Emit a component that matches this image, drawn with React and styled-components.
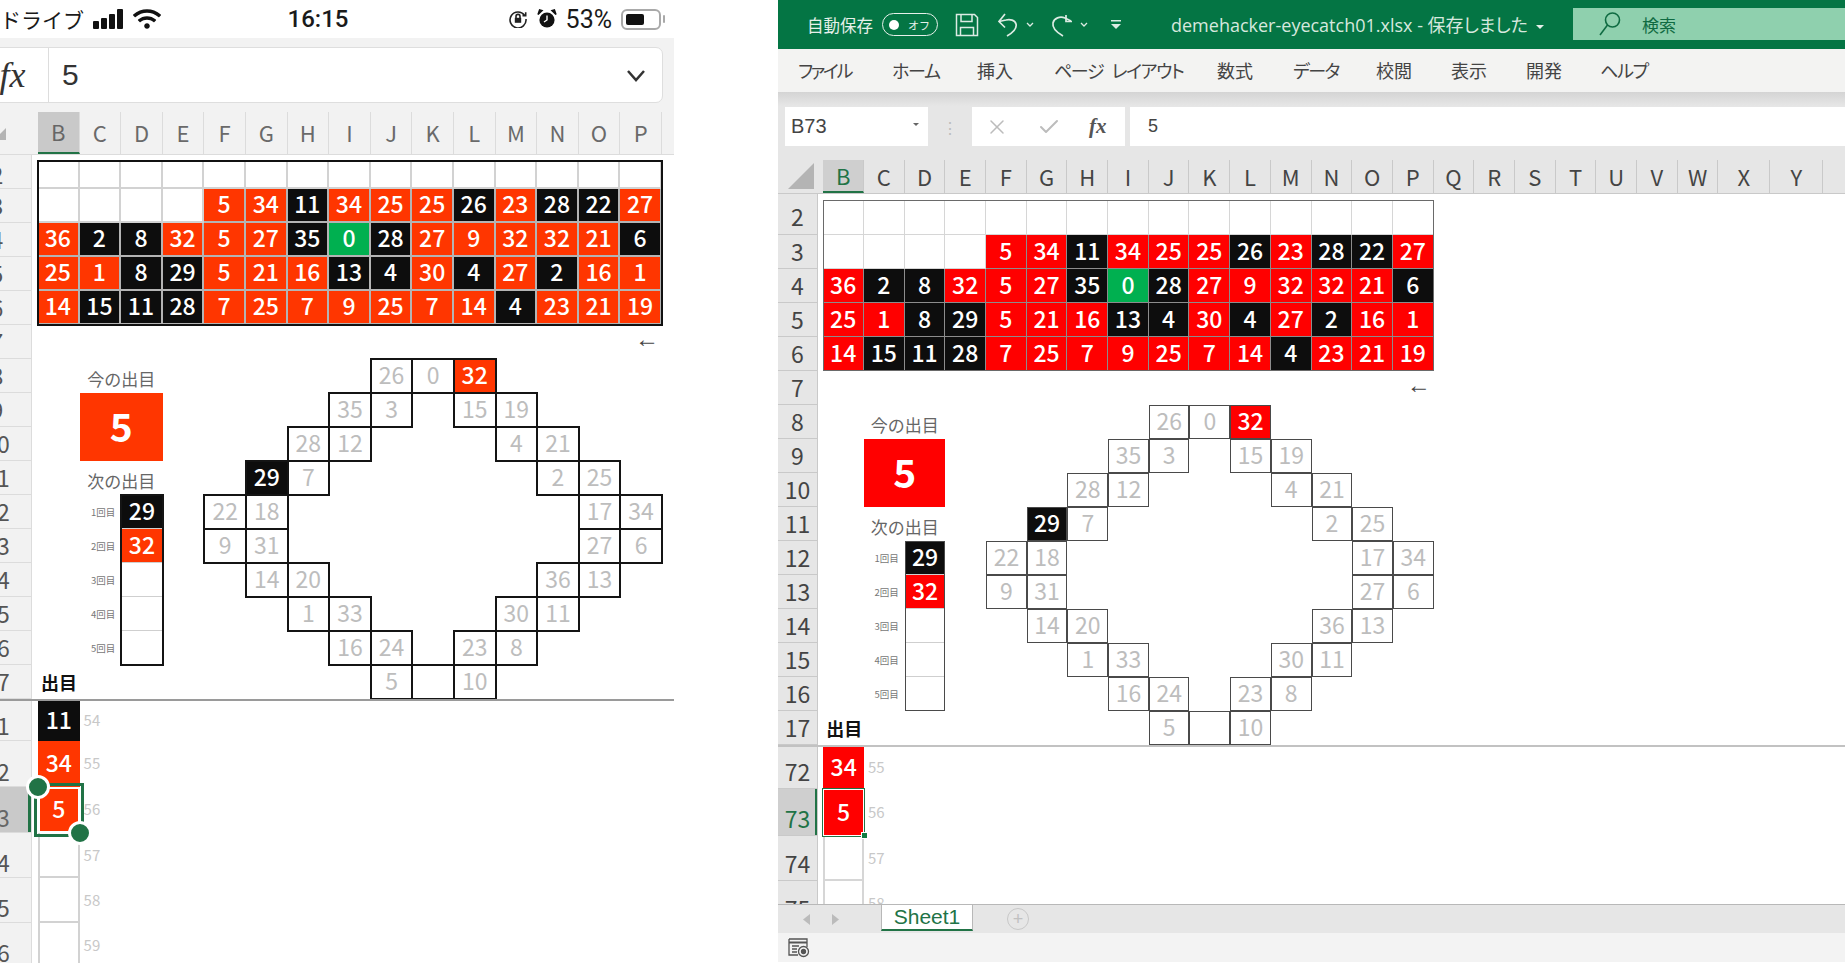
import React from 'react';
import styled, { createGlobalStyle, ThemeProvider } from 'styled-components';
import { FaWifi } from 'react-icons/fa';
import { X, Check } from 'lucide-react';

const jp = '"Noto Sans CJK JP", "Noto Sans", sans-serif';

const phoneTheme = {
    col: 41.6,
    strip: 32,
    gutter: 6,
    labelPull: 37,
    headBg: '#f2f2f2',
    headText: '#6a6a6a',
    headLine: '#dcdcdc',
    stripText: '#555',
    red: '#ff3600',
    black: '#0d0d0d',
    row2: 28,
    tableLine: '#111',
    tableLineW: 2,
    cellLine: '#b4b4b4',
    blankLine: '#d2d2d2',
    cellLineW: 2,
    wheelLine: '#141414',
    wheelW: 2,
    freezeLine: '#9a9a9a',
    selHead: '#c9c9c9',
    selText: '#666',
    digit: 23,
};

const desktopTheme = {
    col: 40.7,
    strip: 40,
    gutter: 5.3,
    labelPull: 0,
    headBg: '#e6e6e6',
    headText: '#444',
    headLine: '#c9c9c9',
    stripText: '#444',
    red: '#ff0000',
    black: '#0d0d0d',
    row2: 35,
    tableLine: '#6a6a6a',
    tableLineW: 1,
    cellLine: '#8c8c8c',
    blankLine: '#d6d6d6',
    cellLineW: 1,
    wheelLine: '#4a4a4a',
    wheelW: 1,
    freezeLine: '#c2c2c2',
    selHead: '#cfcfcf',
    selText: '#217346',
    digit: 23,
};

const TOP_ROWS = [
    '_ _ _ _ _ _ _ _ _ _ _ _ _ _ _',
    '_ _ _ _ r5 r34 b11 r34 r25 r25 b26 r23 b28 b22 r27',
    'r36 b2 b8 r32 r5 r27 b35 g0 b28 r27 r9 r32 r32 r21 b6',
    'r25 r1 b8 b29 r5 r21 r16 b13 b4 r30 b4 r27 b2 r16 r1',
    'r14 b15 b11 b28 r7 r25 r7 r9 r25 r7 r14 b4 r23 r21 r19',
];

const WHEEL_ROWS = [
    '_ _ _ _ p26 p0 r32 _ _ _ _',
    '_ _ _ p35 p3 _ p15 p19 _ _ _',
    '_ _ p28 p12 _ _ _ p4 p21 _ _',
    '_ b29 p7 _ _ _ _ _ p2 p25 _',
    'p22 p18 _ _ _ _ _ _ _ p17 p34',
    'p9 p31 _ _ _ _ _ _ _ p27 p6',
    '_ p14 p20 _ _ _ _ _ p36 p13 _',
    '_ _ p1 p33 _ _ _ p30 p11 _ _',
    '_ _ _ p16 p24 _ p23 p8 _ _ _',
    '_ _ _ _ p5 p p10 _ _ _ _',
];

const NEXT_ROWS = [
    { label: '1回目', tone: 'b', value: '29' },
    { label: '2回目', tone: 'r', value: '32' },
    { label: '3回目' },
    { label: '4回目' },
    { label: '5回目' },
];

const LETTERS = 'BCDEFGHIJKLMNOP'.split('');
const EXTRA_LETTERS = [
    ['Q', 40.7], ['R', 40.7], ['S', 40.7], ['T', 40.7], ['U', 40.7],
    ['V', 40.7], ['W', 40.7], ['X', 52], ['Y', 53], ['Z', 60],
];
const TABS = [
    ['ファイル', 94, -2.3], ['ホーム', 85, -1.2], ['挿入', 77, 0], ['ページ レイアウト', 163, -1.4], ['数式', 76, 0],
    ['データ', 83, -1.5], ['校閲', 75, 0], ['表示', 75, 0], ['開発', 74, 0], ['ヘルプ', 60, -1.2],
];

const toneBg = (p, tone) => {
    if (tone === 'r') return p.theme.red;
    if (tone === 'b') return p.theme.black;
    if (tone === 'g') return '#00b050';
    return '#fff';
};

const GlobalStyle = createGlobalStyle`
    html, body {
        margin: 0;
        background: #fff;
        overflow: hidden;
    }
    body {
        font-family: ${jp};
    }
`;

const Page = styled.div`
    display: flex;
    height: 963px;
    width: 1845px;
    overflow: hidden;
`;

const Panel = styled.div`
    display: flex;
    flex-direction: column;
    height: 963px;
    overflow: hidden;
    width: ${p => p.$width}px;
    margin-left: ${p => p.$offset || 0}px;
`;

/* phone */
const StatusBar = styled.div`
    display: grid;
    grid-template-columns: 270px 96px 1fr;
    align-items: center;
    height: 38px;
    color: #1a1a1a;
    font-size: 21px;
`;

const StatusGroup = styled.div`
    display: flex;
    align-items: center;
    gap: ${p => p.$gap || 0}px;
    justify-content: ${p => (p.$end ? 'flex-end' : 'flex-start')};
    padding-right: ${p => (p.$end ? 10 : 0)}px;
`;

const Clock = styled.div`
    font-family: "Roboto", sans-serif;
    font-weight: 500;
    font-size: 24px;
    text-align: center;
`;

const Percent = styled.span`
    font-family: "Roboto", sans-serif;
    font-size: 25px;
`;

const Bars = styled.div`
    display: flex;
    align-items: flex-end;
    gap: 2px;
    height: 20px;
    margin-left: 9px;
    margin-right: 10px;
`;

const Bar = styled.span`
    display: block;
    width: 6px;
    background: #111;
    border-radius: 1px;
    height: ${p => p.$h}px;
`;

const Battery = styled.div`
    display: flex;
    align-items: center;
    width: 40px;
    height: 21px;
    padding: 3px;
    box-sizing: border-box;
    border: 2px solid #a9a9a9;
    border-radius: 6px;
    margin-right: 3px;
    position: relative;

    &::before {
        content: '';
        display: block;
        width: 18px;
        height: 100%;
        border-radius: 2px;
        background: #111;
    }

    &::after {
        content: '';
        position: absolute;
        right: -6px;
        top: 4px;
        width: 2px;
        height: 8px;
        border-radius: 2px;
        background: #a9a9a9;
    }
`;

const PhoneChrome = styled.div`
    background: #f2f2f2;
    padding-top: 9px;
    height: 74px;
    box-sizing: border-box;
    flex-shrink: 0;
`;

const PhoneFormula = styled.div`
    display: flex;
    align-items: center;
    height: 56px;
    width: 673px;
    margin-left: -10px;
    background: #fff;
    border: 1px solid #dedede;
    border-radius: 7px;
    box-sizing: border-box;
`;

const PhoneFx = styled.div`
    width: 58px;
    height: 100%;
    display: flex;
    align-items: center;
    justify-content: center;
    padding-right: 14px;
    box-sizing: border-box;
    border-right: 1px solid #ddd;
    font-family: "Liberation Serif", serif;
    font-style: italic;
    font-size: 36px;
    color: #333;
`;

const PhoneValue = styled.div`
    flex: 1;
    padding-left: 13px;
    font-family: "Liberation Sans", sans-serif;
    font-size: 30px;
    color: #333;
`;

const ChevronSlot = styled.div`
    display: flex;
    margin-right: 15px;
`;

/* shared column headers */
const ColumnHeader = styled.div`
    display: flex;
    background: ${p => p.theme.headBg};
    border-bottom: 1px solid ${p => p.theme.headLine};
    height: ${p => p.$height}px;
    box-sizing: border-box;
    flex-shrink: 0;
`;

const Corner = styled.div`
    display: flex;
    align-items: flex-end;
    justify-content: ${p => (p.$crop ? 'flex-start' : 'center')};
    width: ${p => p.theme.strip + p.theme.gutter + (p.$crop ? 6 : 0)}px;
    padding-bottom: ${p => (p.$crop ? 14 : 4)}px;
    margin-left: ${p => (p.$crop ? -6 : 0)}px;
    box-sizing: border-box;
    flex-shrink: 0;
`;

const ColumnLetter = styled.div`
    width: ${p => (p.$width ? p.$width : p.theme.col)}px;
    flex-shrink: 0;
    display: flex;
    align-items: center;
    justify-content: center;
    padding-bottom: 2px;
    box-sizing: border-box;
    font-size: 22px;
    color: ${p => (p.$active ? p.theme.selText : p.theme.headText)};
    background: ${p => (p.$active ? p.theme.selHead : 'transparent')};
    border-right: 1px solid ${p => p.theme.headLine};
    border-bottom: ${p => (p.$active ? '2px solid #217346' : 'none')};
`;

/* sheet */
const SheetBody = styled.div`
    display: flex;
    flex-shrink: 0;
`;

const RowStrip = styled.div`
    width: ${p => p.theme.strip}px;
    flex-shrink: 0;
    padding-top: 6px;
    background: ${p => p.theme.headBg};
    border-right: 1px solid ${p => p.theme.headLine};
    box-sizing: border-box;
`;

const RowNumber = styled.div`
    height: ${p => p.$height}px;
    display: flex;
    align-items: ${p => (p.$low ? 'flex-end' : 'center')};
    box-sizing: border-box;
    padding-bottom: ${p => (p.$low ? p.$low : 2)}px;
    border-bottom: 1px solid ${p => p.theme.headLine};
    background: ${p => (p.$active ? p.theme.selHead : 'transparent')};
    color: ${p => (p.$active ? p.theme.selText : p.theme.stripText)};
    font-size: 23px;
    line-height: 28px;
    overflow: hidden;
    position: relative;
`;

const RowLabel = styled.span`
    display: block;
    flex: 1;
    margin-left: -${p => p.theme.labelPull}px;
    text-align: center;
`;

const SelectedMark = styled.span`
    position: absolute;
    right: 0;
    top: 0;
    bottom: 0;
    width: ${p => p.$width}px;
    background: #217346;
`;

const SheetArea = styled.div`
    padding: 6px 0 0 ${p => p.theme.gutter}px;
`;

const Table = styled.div`
    display: grid;
    width: ${p => p.theme.col * 15}px;
    grid-template-columns: repeat(15, ${p => p.theme.col}px);
    grid-template-rows: ${p => p.theme.row2}px repeat(4, 34px);
    outline: ${p => p.theme.tableLineW}px solid ${p => p.theme.tableLine};
    outline-offset: -1px;
`;

const TableCell = styled.div`
    display: flex;
    align-items: center;
    justify-content: center;
    box-sizing: border-box;
    padding-bottom: 3px;
    background: ${p => toneBg(p, p.$tone)};
    border-right: ${p => p.theme.cellLineW}px solid ${p => (p.$tone ? p.theme.cellLine : p.theme.blankLine)};
    border-bottom: ${p => p.theme.cellLineW}px solid ${p => (p.$tone ? p.theme.cellLine : p.theme.blankLine)};
    color: #fff;
    font-size: ${p => p.theme.digit}px;
    font-weight: 500;
    line-height: 1;
`;

const ArrowRow = styled.div`
    height: 34px;
    width: ${p => p.theme.col * 15}px;
    display: flex;
    align-items: center;
    justify-content: flex-end;
    padding: 0 3px 7px 0;
    box-sizing: border-box;
    font-family: "Liberation Sans", sans-serif;
    font-size: 24px;
    line-height: 1;
    color: #444;
`;

const Board = styled.div`
    display: flex;
`;

const SideGrid = styled.div`
    display: grid;
    grid-template-columns: repeat(4, ${p => p.theme.col}px);
    grid-auto-rows: 34px;
    height: 340px;
`;

const Caption = styled.div`
    grid-column: 2 / 4;
    display: flex;
    align-items: flex-end;
    justify-content: center;
    padding-bottom: 6px;
    font-size: 17px;
    color: #666;
    line-height: 1;
    white-space: nowrap;
`;

const NowBox = styled.div`
    grid-column: 2 / 4;
    grid-row: span 2;
    display: flex;
    align-items: center;
    justify-content: center;
    padding-bottom: 4px;
    box-sizing: border-box;
    background: ${p => p.theme.red};
    color: #fff;
    font-size: 39px;
    font-weight: 700;
`;

const NextLabels = styled.div`
    grid-column: 1 / 3;
    grid-row: span 5;
    display: grid;
    grid-auto-rows: 34px;
`;

const NextLabel = styled.div`
    display: flex;
    align-items: center;
    justify-content: flex-end;
    padding-right: 6px;
    font-size: 9.5px;
    color: #777;
`;

const NextList = styled.div`
    grid-column: 3;
    grid-row: span 5;
    display: grid;
    grid-auto-rows: 34px;
    outline: ${p => p.theme.wheelW}px solid ${p => p.theme.wheelLine};
    outline-offset: -1px;
`;

const NextCell = styled.div`
    display: flex;
    align-items: center;
    justify-content: center;
    padding-bottom: 3px;
    box-sizing: border-box;
    background: ${p => toneBg(p, p.$tone)};
    border-bottom: 1px solid #cfcfcf;
    color: #fff;
    font-size: ${p => p.theme.digit}px;
    font-weight: 500;
    line-height: 1;
`;

const SectionTitle = styled.div`
    grid-column: 1 / 3;
    display: flex;
    align-items: center;
    padding-left: 3px;
    font-size: 18px;
    font-weight: 700;
    color: #111;
    white-space: nowrap;
`;

const Wheel = styled.div`
    display: grid;
    grid-template-columns: repeat(11, ${p => p.theme.col}px);
    grid-auto-rows: 34px;
    height: 340px;
`;

const WheelCell = styled.div`
    display: flex;
    align-items: center;
    justify-content: center;
    padding-bottom: 3px;
    box-sizing: border-box;
    background: ${p => (p.$empty ? 'transparent' : toneBg(p, p.$tone))};
    outline: ${p => (p.$empty ? 'none' : `${p.theme.wheelW}px solid ${p.theme.wheelLine}`)};
    outline-offset: -1px;
    color: ${p => (p.$tone === 'p' ? '#bdbdbd' : '#fff')};
    font-size: ${p => p.theme.digit}px;
    font-weight: ${p => (p.$tone === 'p' ? 400 : 500)};
    line-height: 1;
`;

const FreezeLine = styled.div`
    height: 2px;
    flex-shrink: 0;
    background: ${p => p.theme.freezeLine};
`;

/* rows under the frozen pane */
const LowerPane = styled.div`
    flex: 1;
    min-height: 0;
    overflow: hidden;
`;

const LowerRow = styled.div`
    display: flex;
    height: ${p => p.$height}px;
`;

const LowerHead = styled.div`
    width: ${p => p.theme.strip}px;
    flex-shrink: 0;
    background: ${p => p.theme.headBg};
    border-right: 1px solid ${p => p.theme.headLine};
    box-sizing: border-box;
`;

const LowerCell = styled.div`
    margin-left: ${p => p.theme.gutter}px;
    width: ${p => p.theme.col}px;
    flex-shrink: 0;
    display: flex;
    align-items: center;
    justify-content: center;
    padding-bottom: 3px;
    box-sizing: border-box;
    background: ${p => toneBg(p, p.$tone)};
    border: 1px solid ${p => (p.$tone ? 'transparent' : p.theme.blankLine)};
    border-width: ${p => (p.$tone ? 0 : '0 2px 2px 2px')};
    color: #fff;
    font-size: ${p => p.theme.digit}px;
    font-weight: 500;
    line-height: 1;
    position: relative;
`;

const SelectedCell = styled(LowerCell)`
    box-shadow: inset 0 0 0 ${p => p.$inner}px #fff;
    outline: ${p => p.$ring}px solid #217346;
    outline-offset: ${p => p.$gap}px;
    z-index: 1;
`;

const GripDot = styled.span`
    position: absolute;
    width: 18px;
    height: 18px;
    border-radius: 50%;
    background: #217346;
    border: 3px solid #fff;
    left: ${p => (p.$end ? '100%' : '0')};
    top: ${p => (p.$end ? '100%' : '0')};
    transform: translate(-50%, -50%);
`;

const FillHandle = styled.span`
    position: absolute;
    right: -4px;
    bottom: -3px;
    width: 5px;
    height: 5px;
    background: #107c41;
    border: 1px solid #fff;
`;

const RowNote = styled.div`
    display: flex;
    align-items: center;
    margin-left: 4px;
    padding-bottom: 3px;
    font-size: 15px;
    color: #c8c8c8;
`;

/* excel window */
const TitleBar = styled.div`
    display: flex;
    align-items: center;
    height: 49px;
    flex-shrink: 0;
    background: #047544;
    color: #e6f0ea;
    padding-left: 29px;
`;

const AutoSaveText = styled.span`
    font-size: 16.5px;
    white-space: nowrap;
`;

const Toggle = styled.div`
    display: flex;
    align-items: center;
    gap: 9px;
    width: 56px;
    height: 23px;
    margin-left: 9px;
    padding-left: 6px;
    box-sizing: border-box;
    border: 1.5px solid #e6f0ea;
    border-radius: 12px;
    font-size: 11px;
    white-space: nowrap;

    &::before {
        content: '';
        width: 10px;
        height: 10px;
        border-radius: 50%;
        background: #fff;
        flex-shrink: 0;
    }
`;

const QuickIcons = styled.div`
    display: flex;
    align-items: center;
    margin-left: 17px;
    color: #dcebe3;
`;

const IconGap = styled.span`
    width: ${p => p.$width}px;
`;

const TitleText = styled.div`
    margin-left: 49px;
    padding-bottom: 2px;
    font-family: "Open Sans", ${jp};
    font-size: 18px;
    white-space: nowrap;
    color: #d6e8de;
    font-feature-settings: "palt";
`;

const Caret = styled.span`
    display: inline-block;
    margin-left: 8px;
    vertical-align: 3px;
    border-left: 4px solid transparent;
    border-right: 4px solid transparent;
    border-top: 4px solid #e6f0ea;
`;

const SearchBox = styled.div`
    display: flex;
    align-items: center;
    gap: 21px;
    margin-left: auto;
    width: 272px;
    height: 32px;
    margin-bottom: 1px;
    padding-left: 26px;
    box-sizing: border-box;
    background: #8fd0ae;
    color: #0f6b42;
    font-size: 17px;
    flex-shrink: 0;
`;

const Ribbon = styled.div`
    display: flex;
    align-items: center;
    height: 43px;
    flex-shrink: 0;
    padding: 0 0 2px 8px;
    box-sizing: border-box;
    background: #f3f3f2;
`;

const RibbonTab = styled.div`
    width: ${p => p.$width}px;
    flex-shrink: 0;
    padding-left: 12px;
    box-sizing: border-box;
    font-size: 18px;
    color: #444;
    white-space: nowrap;
    font-feature-settings: "palt";
    letter-spacing: ${p => p.$tight}px;
    word-spacing: 6px;
`;

const FormulaBand = styled.div`
    display: flex;
    align-items: center;
    height: 68px;
    flex-shrink: 0;
    padding: 15px 0 14px 7px;
    box-sizing: border-box;
    background: linear-gradient(#d4d4d4 0, #e6e6e6 14px);
`;

const NameBox = styled.div`
    display: flex;
    align-items: center;
    justify-content: space-between;
    width: 143px;
    height: 39px;
    padding: 0 9px 0 6px;
    box-sizing: border-box;
    background: #fff;
    font-family: "Liberation Sans", sans-serif;
    font-size: 20px;
    color: #444;
`;

const TinyCaret = styled.span`
    border-left: 3px solid transparent;
    border-right: 3px solid transparent;
    border-top: 3px solid #666;
    margin-bottom: 4px;
`;

const Splitter = styled.div`
    width: 44px;
    flex-shrink: 0;
    display: flex;
    align-items: center;
    justify-content: center;
    color: #bdbdbd;
    font-size: 16px;
`;

const FxButtons = styled.div`
    display: flex;
    align-items: center;
    width: 153px;
    height: 39px;
    padding-left: 13px;
    gap: 28px;
    box-sizing: border-box;
    background: #fff;
    color: #bcbcbc;
`;

const FxLabel = styled.span`
    font-family: "Liberation Serif", serif;
    font-style: italic;
    font-weight: 700;
    font-size: 21px;
    color: #555;
`;

const FormulaInput = styled.div`
    flex: 1;
    display: flex;
    align-items: center;
    height: 39px;
    margin-left: 5px;
    padding-left: 18px;
    background: #fff;
    font-family: "Liberation Sans", sans-serif;
    font-size: 18px;
    color: #444;
`;

const SheetViewport = styled.div`
    flex: 1;
    min-height: 0;
    display: flex;
    flex-direction: column;
    overflow: hidden;
`;

const TabBar = styled.div`
    display: flex;
    align-items: stretch;
    height: 29px;
    flex-shrink: 0;
    background: #e6e6e6;
    border-top: 1px solid #b8b8b8;
    box-sizing: border-box;
`;

const TabArrows = styled.div`
    display: flex;
    align-items: center;
    gap: 22px;
    width: 103px;
    padding-left: 25px;
    box-sizing: border-box;
    color: #bbb;
`;

const SheetTab = styled.div`
    width: 92px;
    display: flex;
    align-items: center;
    justify-content: center;
    background: #fff;
    border-left: 1px solid #b8b8b8;
    border-right: 1px solid #b8b8b8;
    border-bottom: 2px solid #217346;
    box-sizing: border-box;
    margin-bottom: 2px;
    font-family: "Liberation Sans", sans-serif;
    font-size: 21px;
    color: #217346;
`;

const AddSheet = styled.div`
    align-self: center;
    margin-left: 34px;
    width: 20px;
    height: 20px;
    border: 1.5px solid #c8c8c8;
    border-radius: 50%;
    display: flex;
    align-items: center;
    justify-content: center;
    color: #c0c0c0;
    font-family: "Liberation Sans", sans-serif;
    font-size: 18px;
    line-height: 1;
`;

const StatusStrip = styled.div`
    display: flex;
    align-items: center;
    height: 29px;
    margin-bottom: 1px;
    flex-shrink: 0;
    padding-left: 10px;
    background: #f3f3f3;
`;

const WifiIcon = styled(FaWifi)`
    font-size: 28px;
    color: #111;
`;

/* drawings */
const OrientationLock = () => (
    <svg width="20" height="18" viewBox="0 0 20 18" fill="none" stroke="#222" strokeWidth="1.6">
        <path d="M16.5 5.2A8 8 0 1 0 18 9" />
        <path d="M14.5 5.6h3.2V2.2" />
        <rect x="6.8" y="7.8" width="6.4" height="5" fill="#222" stroke="none" />
        <path d="M8 8V6.4a2 2 0 0 1 4 0V8" />
    </svg>
);

const AlarmClock = () => (
    <svg width="20" height="20" viewBox="0 0 20 20">
        <circle cx="10" cy="11" r="7.6" fill="#111" />
        <path d="M1 5.5 5 1.6 2.6 1ZM19 5.5 15 1.6 17.4 1Z" fill="#111" stroke="#111" strokeWidth="1.5" />
        <path d="M10 6.5V11l-3 2" stroke="#fff" strokeWidth="1.4" fill="none" />
    </svg>
);

const FormulaCaret = () => (
    <svg width="22" height="22" viewBox="0 0 22 22" fill="none" stroke="#333" strokeWidth="2.5">
        <path d="M3 7l8 9 8-9" />
    </svg>
);

const CornerTriangle = ({ size }) => (
    <svg width={size} height={size} viewBox="0 0 24 24">
        <path d="M24 0V24H0Z" fill="#b4b4b4" />
    </svg>
);

const SaveIcon = () => (
    <svg width="24" height="24" viewBox="0 0 24 24" fill="none" stroke="currentColor" strokeWidth="1.5">
        <path d="M1.5 1.5h18l3 3v18h-21Z" />
        <path d="M6 1.5v7h11v-7" />
        <path d="M5.5 22.5v-8h13v8" />
    </svg>
);

const UndoIcon = () => (
    <svg width="24" height="26" viewBox="0 0 24 26" fill="none" stroke="currentColor" strokeWidth="1.7">
        <path d="M11 24C18 20 21 16 20 12c-1-4-6-5-10-4L3 9.5" />
        <path d="M9 2 3 9.5l6 6" />
    </svg>
);

const RedoIcon = () => (
    <svg width="24" height="26" viewBox="0 0 24 26" fill="none" stroke="currentColor" strokeWidth="1.7">
        <path d="M13 24C6 20 2 16 3 11c1-5 7-7 12-5l6 3" />
        <path d="M16 3v6.5h6" />
    </svg>
);

const SmallChevron = () => (
    <svg width="8" height="6" viewBox="0 0 8 6" fill="none" stroke="currentColor" strokeWidth="1.3">
        <path d="M1 1l3 3 3-3" />
    </svg>
);

const CustomizeIcon = () => (
    <svg width="12" height="10" viewBox="0 0 12 10" fill="currentColor">
        <rect x="1" y="0" width="10" height="1.5" />
        <path d="M1 4h10L6 9Z" />
    </svg>
);

const SearchIcon = () => (
    <svg width="22" height="26" viewBox="0 0 22 26" fill="none" stroke="currentColor" strokeWidth="1.6">
        <circle cx="13.5" cy="9" r="7" />
        <path d="M8.5 14 1 24" />
    </svg>
);

const NavArrow = ({ flip }) => (
    <svg width="7" height="11" viewBox="0 0 7 11" fill="currentColor">
        <path d={flip ? 'M0 0l7 5.5L0 11Z' : 'M7 0 0 5.5 7 11Z'} />
    </svg>
);

const PageIcon = () => (
    <svg width="22" height="20" viewBox="0 0 22 20" fill="none" stroke="#555" strokeWidth="1.3">
        <path d="M1 1h18v8M1 1v16h9" />
        <path d="M1 4.5h18" strokeWidth="2" />
        <path d="M4 8h7M4 11h5M4 14h5" />
        <circle cx="15.5" cy="13.5" r="5" />
        <circle cx="15.5" cy="13.5" r="2" fill="#555" />
    </svg>
);

const parseCell = token => ({ tone: token === '_' ? '' : token[0], value: token.slice(1) });

const Sheet = ({ row2 }) => (
    <SheetBody>
        <RowStrip>
            {Array.from({ length: 16 }, (_, i) => (
                <RowNumber key={i} $height={i === 0 ? row2 : 34}>
                    <RowLabel>{i + 2}</RowLabel>
                </RowNumber>
            ))}
        </RowStrip>
        <SheetArea>
            <Table>
                {TOP_ROWS.flatMap((row, r) =>
                    row.split(' ').map((token, c) => {
                        const cell = parseCell(token);
                        return (
                            <TableCell key={`${r}-${c}`} $tone={cell.tone}>
                                {cell.value}
                            </TableCell>
                        );
                    })
                )}
            </Table>
            <ArrowRow>←</ArrowRow>
            <Board>
                <SideGrid>
                    <Caption>今の出目</Caption>
                    <NowBox>5</NowBox>
                    <Caption>次の出目</Caption>
                    <NextLabels>
                        {NEXT_ROWS.map(row => (
                            <NextLabel key={row.label}>{row.label}</NextLabel>
                        ))}
                    </NextLabels>
                    <NextList>
                        {NEXT_ROWS.map(row => (
                            <NextCell key={row.label} $tone={row.tone}>
                                {row.value}
                            </NextCell>
                        ))}
                    </NextList>
                    <SectionTitle>出目</SectionTitle>
                </SideGrid>
                <Wheel>
                    {WHEEL_ROWS.flatMap((row, r) =>
                        row.split(' ').map((token, c) => {
                            const cell = parseCell(token);
                            return (
                                <WheelCell key={`${r}-${c}`} $empty={token === '_'} $tone={cell.tone}>
                                    {cell.value}
                                </WheelCell>
                            );
                        })
                    )}
                </Wheel>
            </Board>
        </SheetArea>
    </SheetBody>
);

const PHONE_LOWER = [
    { row: 71, height: 40, tone: 'b', value: '11', note: 54 },
    { row: 72, height: 46, tone: 'r', value: '34', note: 55 },
    { row: 73, height: 46, tone: 'r', value: '5', note: 56, selected: true },
    { row: 74, height: 45, note: 57 },
    { row: 75, height: 45, note: 58 },
    { row: 76, height: 45, note: 59 },
];

const DESKTOP_LOWER = [
    { row: 72, height: 42, tone: 'r', value: '34', note: 55 },
    { row: 73, height: 47, tone: 'r', value: '5', note: 56, selected: true },
    { row: 74, height: 45, note: 57 },
    { row: 75, height: 45, note: 58 },
];

const LowerRows = ({ rows, phone }) => (
    <LowerPane>
        {rows.map(item => (
            <LowerRow key={item.row} $height={item.height}>
                <LowerHead>
                    <RowNumber $height={item.height} $low={phone ? 1 : 3} $active={item.selected}>
                        <RowLabel>{item.row}</RowLabel>
                        {item.selected && <SelectedMark $width={phone ? 3 : 2} />}
                    </RowNumber>
                </LowerHead>
                {item.selected ? (
                    <SelectedCell
                        $tone={item.tone}
                        $inner={phone ? 2 : 1}
                        $ring={phone ? 3 : 1}
                        $gap={phone ? 1 : 0}
                    >
                        {item.value}
                        {phone ? (
                            <>
                                <GripDot />
                                <GripDot $end />
                            </>
                        ) : (
                            <FillHandle />
                        )}
                    </SelectedCell>
                ) : (
                    <LowerCell $tone={item.tone}>{item.value}</LowerCell>
                )}
                <RowNote>{item.note}</RowNote>
            </LowerRow>
        ))}
    </LowerPane>
);

const PhoneView = () => (
    <ThemeProvider theme={phoneTheme}>
        <Panel $width={674}>
            <StatusBar>
                <StatusGroup>
                    <span>ドライブ</span>
                    <Bars>
                        <Bar $h={8} />
                        <Bar $h={11} />
                        <Bar $h={15} />
                        <Bar $h={20} />
                    </Bars>
                    <WifiIcon />
                </StatusGroup>
                <Clock>16:15</Clock>
                <StatusGroup $end $gap={9}>
                    <OrientationLock />
                    <AlarmClock />
                    <Percent>53%</Percent>
                    <Battery />
                </StatusGroup>
            </StatusBar>
            <PhoneChrome>
                <PhoneFormula>
                    <PhoneFx>fx</PhoneFx>
                    <PhoneValue>5</PhoneValue>
                    <ChevronSlot>
                        <FormulaCaret />
                    </ChevronSlot>
                </PhoneFormula>
            </PhoneChrome>
            <ColumnHeader $height={43}>
                <Corner $crop>
                    <CornerTriangle size={12} />
                </Corner>
                {LETTERS.map(letter => (
                    <ColumnLetter key={letter} $active={letter === 'B'}>
                        {letter}
                    </ColumnLetter>
                ))}
            </ColumnHeader>
            <Sheet row2={28} />
            <FreezeLine />
            <LowerRows rows={PHONE_LOWER} phone />
        </Panel>
    </ThemeProvider>
);

const DesktopView = () => (
    <ThemeProvider theme={desktopTheme}>
        <Panel $width={1067} $offset={104}>
            <TitleBar>
                <AutoSaveText>自動保存</AutoSaveText>
                <Toggle>オフ</Toggle>
                <QuickIcons>
                    <SaveIcon />
                    <IconGap $width={17} />
                    <UndoIcon />
                    <IconGap $width={6} />
                    <SmallChevron />
                    <IconGap $width={16} />
                    <RedoIcon />
                    <IconGap $width={6} />
                    <SmallChevron />
                    <IconGap $width={22} />
                    <CustomizeIcon />
                </QuickIcons>
                <TitleText>
                    demehacker-eyecatch01.xlsx - 保存しました
                    <Caret />
                </TitleText>
                <SearchBox>
                    <SearchIcon />
                    検索
                </SearchBox>
            </TitleBar>
            <Ribbon>
                {TABS.map(([label, width, tight]) => (
                    <RibbonTab key={label} $width={width} $tight={tight}>
                        {label}
                    </RibbonTab>
                ))}
            </Ribbon>
            <FormulaBand>
                <NameBox>
                    B73
                    <TinyCaret />
                </NameBox>
                <Splitter>⋮</Splitter>
                <FxButtons>
                    <X size={24} strokeWidth={1.5} />
                    <Check size={24} strokeWidth={2} />
                    <FxLabel>fx</FxLabel>
                </FxButtons>
                <FormulaInput>5</FormulaInput>
            </FormulaBand>
            <ColumnHeader $height={34}>
                <Corner>
                    <CornerTriangle size={26} />
                </Corner>
                {LETTERS.map(letter => (
                    <ColumnLetter key={letter} $active={letter === 'B'}>
                        {letter}
                    </ColumnLetter>
                ))}
                {EXTRA_LETTERS.map(([letter, width]) => (
                    <ColumnLetter key={letter} $width={width}>
                        {letter}
                    </ColumnLetter>
                ))}
            </ColumnHeader>
            <SheetViewport>
                <Sheet row2={35} />
                <FreezeLine />
                <LowerRows rows={DESKTOP_LOWER} />
            </SheetViewport>
            <TabBar>
                <TabArrows>
                    <NavArrow />
                    <NavArrow flip />
                </TabArrows>
                <SheetTab>Sheet1</SheetTab>
                <AddSheet>+</AddSheet>
            </TabBar>
            <StatusStrip>
                <PageIcon />
            </StatusStrip>
        </Panel>
    </ThemeProvider>
);

const App = () => (
    <>
        <GlobalStyle />
        <Page>
            <PhoneView />
            <DesktopView />
        </Page>
    </>
);

export default App;
